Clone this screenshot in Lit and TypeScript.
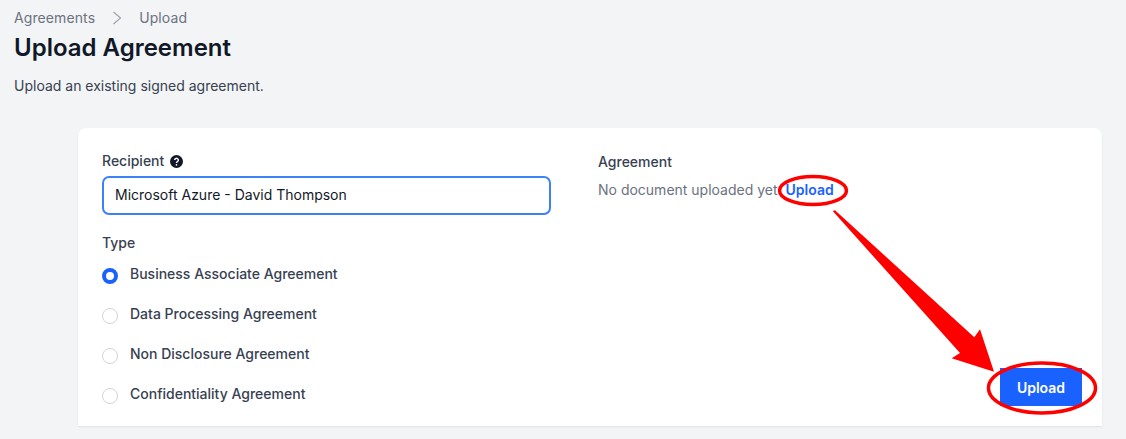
import { LitElement, html, css, svg } from "lit";
import { customElement } from "lit/decorators.js";

const TYPES = [
  { label: "Business Associate Agreement", checked: true },
  { label: "Data Processing Agreement", checked: false },
  { label: "Non Disclosure Agreement", checked: false },
  { label: "Confidentiality Agreement", checked: false },
];

@customElement("app-root")
export class AppRoot extends LitElement {
  static styles = css`
    :host {
      display: block;
      position: relative;
      width: 1126px;
      height: 439px;
      overflow: hidden;
      background: #f3f4f6;
      font-family: Inter, "Liberation Sans", sans-serif;
      font-size: 14px;
      color: #374151;
    }
    .head { padding: 8px 14px 0; }
    .crumbs {
      display: flex;
      align-items: center;
      gap: 17px;
      height: 20px;
      color: #6b7280;
      line-height: 20px;
      letter-spacing: 0.1px;
    }
    .crumbs svg { display: block; }
    h1 {
      margin: 4px 0 0;
      font-size: 24px;
      line-height: 32px;
      font-weight: 600;
      color: #111827;
    }
    .sub { margin: 12px 0 0; line-height: 20px; color: #374151; }
    .card {
      margin: 32px 24px 0 78px;
      height: 298px;
      box-sizing: border-box;
      background: #fff;
      border-radius: 8px 8px 0 0;
      box-shadow: 0 1px 2px rgba(0, 0, 0, 0.08);
      padding: 24px 20px 20px 24px;
      display: grid;
      grid-template-columns: 449px 1fr;
      column-gap: 47px;
      position: relative;
    }
    .left { margin-top: -1px; }
    .label {
      display: flex;
      align-items: center;
      gap: 6px;
      height: 20px;
      line-height: 20px;
      font-weight: 500;
      color: #374151;
    }
    .input {
      box-sizing: border-box;
      margin-top: 5px;
      height: 39px;
      border: 2px solid #3b82f6;
      border-radius: 7px;
      padding: 0 11px 2px;
      display: flex;
      align-items: center;
      color: #111827;
    }
    .type { margin-top: 18px; }
    .radios { margin-top: 11px; display: flex; flex-direction: column; gap: 20px; }
    .radio {
      display: flex;
      align-items: flex-start;
      gap: 12px;
      height: 20px;
      line-height: 20px;
      font-weight: 500;
      color: #374151;
    }
    .dot {
      box-sizing: border-box;
      width: 16px;
      height: 16px;
      margin-top: 4px;
      border-radius: 50%;
      border: 1px solid #d1d5db;
      background: #fff;
      flex: none;
    }
    .dot.on { border: 4.5px solid #1a62ff; }
    .status { margin-top: 8px; line-height: 20px; color: #6b7280; }
    .status a { color: #1a62ff; font-weight: 600; text-decoration: none; margin-left: 8px; }
    .btn {
      position: absolute;
      right: 20px;
      bottom: 20px;
      width: 82px;
      height: 38px;
      border: 0;
      padding: 0;
      background: #1a62ff;
      color: #fff;
      font: 600 14px Inter, "Liberation Sans", sans-serif;
    }
    .marks { position: absolute; inset: 0; pointer-events: none; }
  `;

  render() {
    return html`
      <div class="head">
        <nav class="crumbs">
          <span>Agreements</span>
          <svg width="10" height="14" viewBox="0 0 10 14" fill="none">
            <path d="M1.5 1l7 6-7 6" stroke="#9ca3af" stroke-width="1.2" />
          </svg>
          <span>Upload</span>
        </nav>
        <h1>Upload Agreement</h1>
        <p class="sub">Upload an existing signed agreement.</p>
      </div>
      <section class="card">
        <div class="left">
          <div class="label">
            Recipient
            <svg width="13" height="13" viewBox="0 0 14 14">
              <circle cx="7" cy="7" r="7" fill="#111827" />
              <path d="M5 5.4a2 1.9 0 1 1 3 1.7c-.7.4-1 .7-1 1.5" fill="none" stroke="#fff" stroke-width="1.5" />
              <circle cx="7" cy="10.6" r=".95" fill="#fff" />
            </svg>
          </div>
          <div class="input">Microsoft Azure - David Thompson</div>
          <div class="label type">Type</div>
          <div class="radios">
            ${TYPES.map(
              (t) => html`<div class="radio"><span class="dot ${t.checked ? "on" : ""}"></span>${t.label}</div>`
            )}
          </div>
        </div>
        <div>
          <div class="label">Agreement</div>
          <div class="status">No document uploaded yet<a href="#">Upload</a></div>
        </div>
        <button class="btn">Upload</button>
      </section>
      <svg class="marks" width="1126" height="439" viewBox="0 0 1126 439">
        ${svg`
          <ellipse cx="813" cy="190.5" rx="33.5" ry="14" fill="none" stroke="#f00" stroke-width="3.5" />
          <ellipse cx="1042" cy="388" rx="53.5" ry="25" fill="none" stroke="#f00" stroke-width="3.5" />
          <polygon points="832.7,211 835,210.3 974.3,337.3 980,329.3 994,371.7 951.7,358.3 960,353" fill="#f00" />
        `}
      </svg>
    `;
  }
}
